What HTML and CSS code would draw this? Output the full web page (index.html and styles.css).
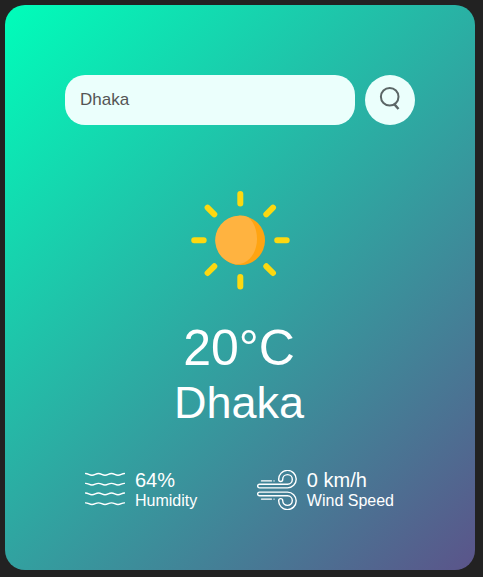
FILE: index.html
```html
<!DOCTYPE html>
<html lang="en">
<head>
<meta charset="utf-8">
<title>Weather</title>
<link rel="stylesheet" href="styles.css">
</head>
<body>
<main class="card">
  <form class="search">
    <input class="search-input" type="text" value="Dhaka" aria-label="City">
    <button class="search-button" type="button" aria-label="Search">
      <svg width="22" height="24" viewBox="0 0 22 24" fill="none" stroke="#5b6666">
        <circle cx="10.700" cy="9.800" r="8.800" stroke-width="2"/>
        <path d="M14.800 16.600l4.700 5.400" stroke-width="2.400"/>
      </svg>
    </button>
  </form>
  <section class="weather">
    <svg class="sun" viewBox="0 0 100 100">
      <circle cx="50.4" cy="50.4" r="24.6" fill="#ffa412"/>
      <path d="M58 27A24.6 24.6 0 1 0 44 74.100C57 76 67 64 67 49C67 39 63 31 58 27Z" fill="#ffb340"/>
      <path d="M50.3 4v9.5M50.3 87v9.5M4.2 50.3h9.5M87.2 50.3h9.5M17.6 17.6l6.7 6.7M76.3 76.3l6.7 6.7M83 17.6l-6.7 6.7M24.3 76.3l-6.7 6.7" fill="none" stroke="#fdd810" stroke-width="6" stroke-linecap="round"/>
    </svg>
    <h1 class="temp">20°C</h1>
    <h2 class="city">Dhaka</h2>
  </section>
  <section class="details">
    <div class="detail">
      <svg class="detail-icon" viewBox="0 0 40 40" fill="none" stroke="#fff" stroke-width="1.35" stroke-linecap="round">
        <path d="M.5 3.500c3 0 3.500 1.700 6.500 1.700s3.500-1.700 6.500-1.700 3.500 1.700 6.500 1.700 3.500-1.700 6.500-1.700 3.500 1.700 6.500 1.700 3.500-1.700 6.500-1.700"/>
        <path d="M.5 13.300c3 0 3.500 1.700 6.500 1.700s3.500-1.700 6.500-1.700 3.500 1.700 6.500 1.700 3.500-1.700 6.500-1.700 3.500 1.700 6.500 1.700 3.500-1.700 6.500-1.700"/>
        <path d="M.5 23c3 0 3.500 1.700 6.500 1.700s3.500-1.700 6.500-1.700 3.500 1.700 6.500 1.700 3.500-1.700 6.500-1.700 3.500 1.700 6.500 1.700 3.500-1.700 6.500-1.700"/>
        <path d="M.5 32.800c3 0 3.500 1.700 6.500 1.700s3.500-1.700 6.500-1.700 3.500 1.700 6.500 1.700 3.500-1.700 6.500-1.700 3.500 1.700 6.500 1.700 3.500-1.700 6.500-1.700"/>
      </svg>
      <div>
        <p class="value">64%</p>
        <p class="label">Humidity</p>
      </div>
    </div>
    <div class="detail">
      <svg class="detail-icon" viewBox="0 0 40 40" fill="none" stroke="#fff" stroke-width="1.4" stroke-linecap="round" stroke-linejoin="round">
        <path d="M4.500 10.900h10M17 10.900h.1M4.500 29.100h10M17 29.100h.1"/>
        <path d="M20 14.200h10.500a4.800 4.800 0 1 0-4.800-4.800c0 2.700-4 2.700-4 0a8.750 8.750 0 1 1 8.750 8.500H2.500a1.850 1.850 0 0 1 0-3.700H20"/>
        <path d="M20 25.800h10.500a4.800 4.800 0 1 1-4.800 4.800c0-2.700-4-2.700-4 0a8.750 8.750 0 1 0 8.750-8.500H2.500a1.850 1.850 0 0 0 0 3.700H20"/>
      </svg>
      <div>
        <p class="value">0 km/h</p>
        <p class="label">Wind Speed</p>
      </div>
    </div>
  </section>
</main>
</body>
</html>
```

FILE: styles.css
```css
* {
  box-sizing: border-box;
  margin: 0;
  padding: 0;
}

body {
  padding: 5px;
  background: #222;
  font-family: "Liberation Sans", Arial, sans-serif;
}

.card {
  width: 470px;
  height: 565px;
  padding: 70px 60px 0;
  border-radius: 20px;
  background: linear-gradient(135deg, #00feba, #5b548a);
  color: #fff;
}

.search {
  display: flex;
  gap: 10px;
}

.search-input {
  flex: 1;
  min-width: 0;
  height: 50px;
  padding: 0 15px;
  border: 0;
  border-radius: 20px;
  outline: 0;
  background: #ebfffc;
  color: #555;
  font: 17px "Liberation Sans", Arial, sans-serif;
}

.search-button {
  display: flex;
  align-items: center;
  justify-content: center;
  width: 50px;
  height: 50px;
  padding-bottom: 2px;
  border: 0;
  border-radius: 50%;
  background: #ebfffc;
}

.weather {
  display: flex;
  flex-direction: column;
  align-items: center;
  padding-top: 65px;
}

.sun {
  width: 100px;
  height: 100px;
}

.temp {
  margin-top: 30px;
  padding-right: 2px;
  font-size: 50px;
  font-weight: 400;
  line-height: 57px;
}

.city {
  padding-right: 2px;
  font-size: 45px;
  font-weight: 400;
  line-height: 52px;
}

.details {
  display: flex;
  justify-content: space-between;
  margin-top: 40px;
  padding: 0 21px 0 20px;
}

.detail {
  display: flex;
  align-items: center;
  gap: 10px;
}

.detail-icon {
  width: 40px;
  height: 40px;
}

.value {
  font-size: 20px;
  line-height: 23px;
}

.label {
  font-size: 16px;
  line-height: 18px;
}
```
